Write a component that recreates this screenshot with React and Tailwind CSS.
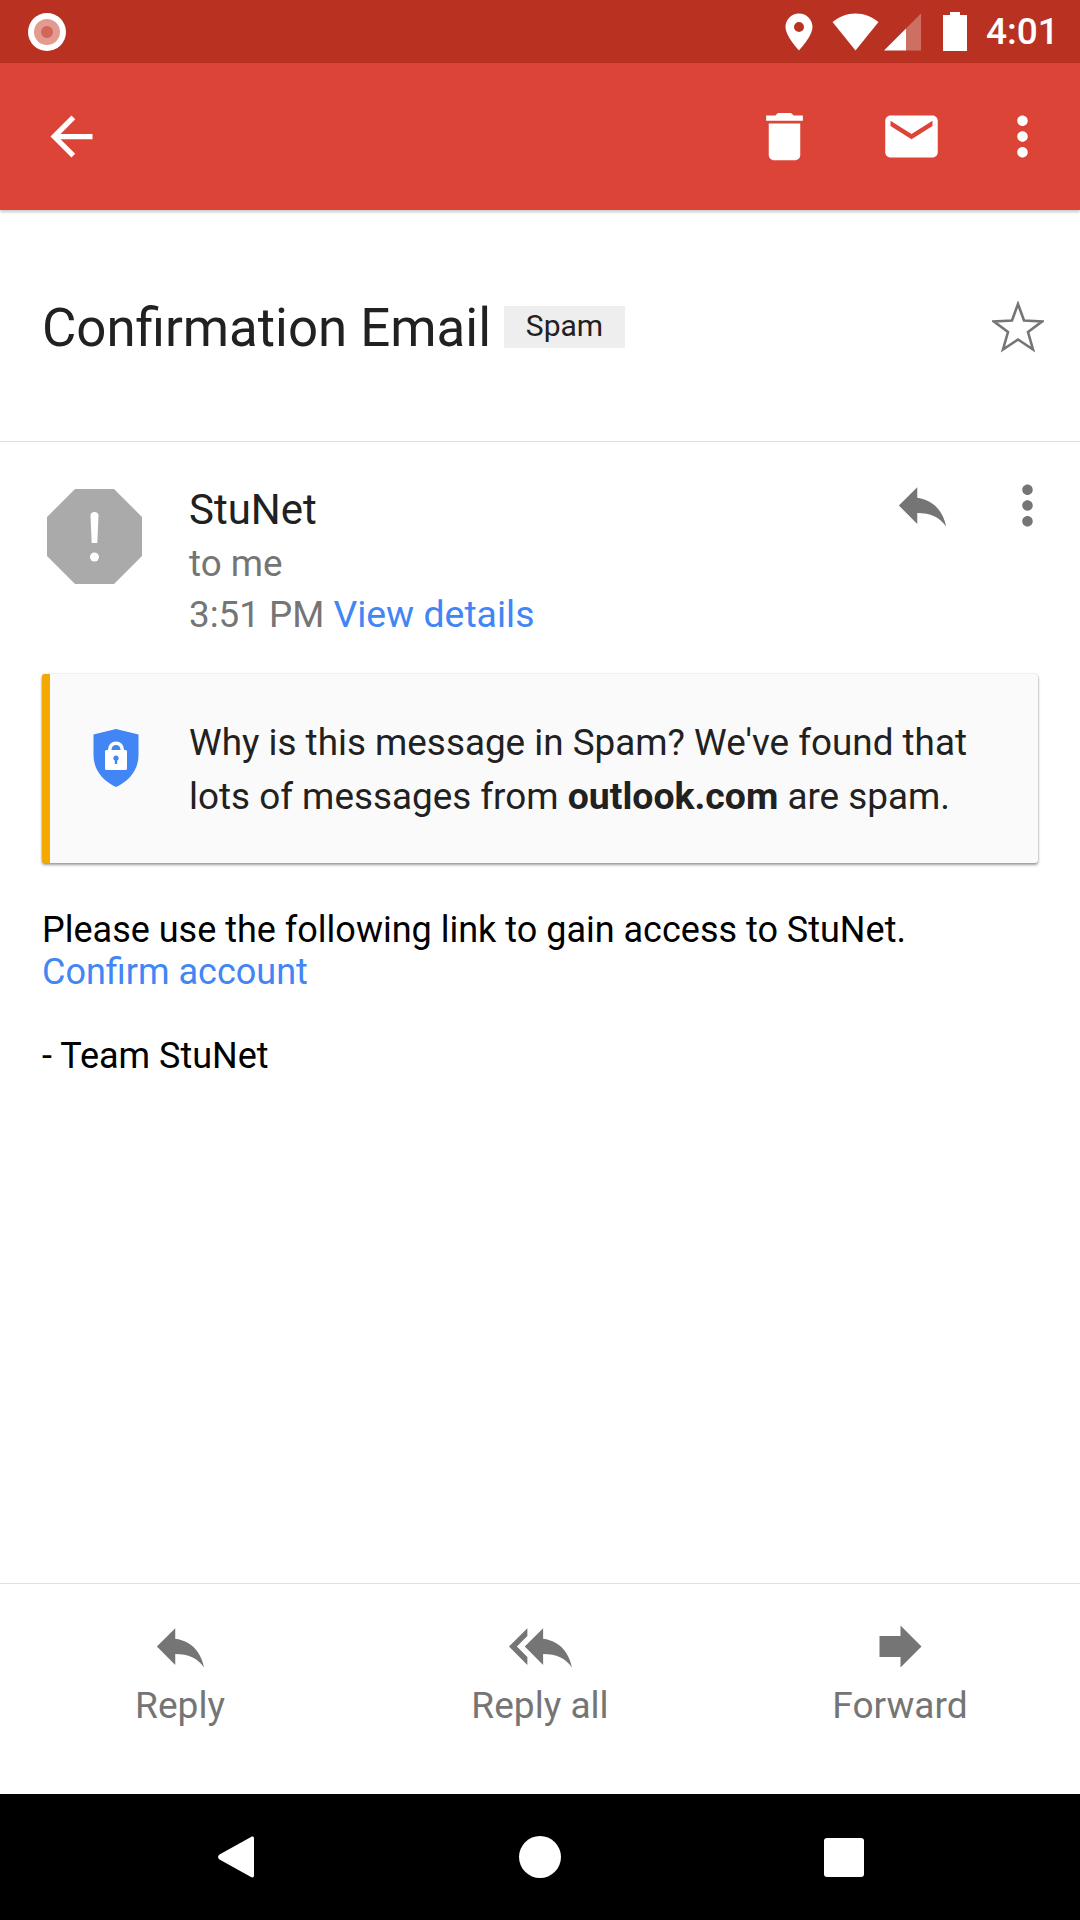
import React from 'react';

const Icon = ({ d, size = 63, className = '', vb = '0 0 24 24' }) => (
  <svg viewBox={vb} width={size} height={size} className={className} fill="currentColor">
    <path d={d} />
  </svg>
);

const REPLY = 'M10 9V5l-7 7 7 7v-4.1c5 0 8.5 1.6 11 5.1-1-5-4-10-11-11z';
const REPLY_ALL = 'M7 8V5l-7 7 7 7v-3l-4-4 4-4zm6 1V5l-7 7 7 7v-4.1c5 0 8.5 1.6 11 5.1-1-5-4-10-11-11z';
const FORWARD = 'M12 8V4l8 8-8 8v-4H4V8z';
const MORE = 'M12 8c1.1 0 2-.9 2-2s-.9-2-2-2-2 .9-2 2 .9 2 2 2zm0 2c-1.1 0-2 .9-2 2s.9 2 2 2 2-.9 2-2-.9-2-2-2zm0 6c-1.1 0-2 .9-2 2s.9 2 2 2 2-.9 2-2-.9-2-2-2z';

const StatusBar = () => (
  <div className="h-[63px] bg-[#b93221] flex items-center justify-between pl-[28px] pr-[25px] shrink-0">
    <svg width="38" height="38" viewBox="0 0 38 38">
      <circle cx="19" cy="19" r="19" fill="#fff" />
      <circle cx="19" cy="19" r="13" fill="#e39a90" />
      <circle cx="19" cy="19" r="6" fill="#d0675a" />
    </svg>
    <div className="flex items-center text-white">
      <svg width="28" height="38" viewBox="0 0 28 38" className="mr-[19px]">
        <path fill="#fff" fillRule="evenodd" d="M14 0.5C6.5 0.5 0.5 6.5 0.5 14 0.5 23 14 37.5 14 37.5S27.5 23 27.5 14C27.5 6.5 21.5 0.5 14 0.5zM14 9a5 5 0 1 1 0 10 5 5 0 0 1 0-10z" />
      </svg>
      <svg width="47" height="38" viewBox="0 0 47 38">
        <path fill="#fff" d="M23.5 37.5L0.5 9C7 3.8 15 0.5 23.5 0.5S40 3.8 46.5 9z" />
      </svg>
      <svg width="37" height="38" viewBox="0 0 37 38" className="ml-[5px]">
        <path fill="#fff" fillOpacity="0.3" d="M37 0.5V37.500H22V15.500z" />
        <path fill="#fff" d="M0 37.500L22 15.500V37.500z" />
      </svg>
      <svg width="24" height="39" viewBox="0 0 24 39" className="ml-[22px]">
        <path fill="#fff" d="M7 0h10v3h7v36H0V3h7z" />
      </svg>
      <span className="ml-[19px] text-[37px] leading-none font-medium w-[69px]">4:01</span>
    </div>
  </div>
);

const Toolbar = () => (
  <div className="relative z-10 h-[147px] bg-[#db4437] text-white shadow-[0_2px_3px_rgba(0,0,0,0.22)] flex items-center shrink-0 pl-[40px]">
    <Icon d="M20 11H7.83l5.59-5.59L12 4l-8 8 8 8 1.41-1.41L7.83 13H20v-2z" />
    <div className="flex-1" />
    <Icon d="M6 19c0 1.1.9 2 2 2h8c1.1 0 2-.9 2-2V7H6v12zM19 4h-3.5l-1-1h-5l-1 1H5v2h14V4z" className="mr-[64px]" />
    <Icon d="M20 4H4c-1.1 0-1.99.9-1.99 2L2 18c0 1.1.9 2 2 2h16c1.1 0 2-.9 2-2V6c0-1.1-.9-2-2-2zm0 4l-8 5-8-5V6l8 5 8-5v2z" className="mr-[48px]" />
    <Icon d={MORE} className="mr-[26px]" />
  </div>
);

const Subject = () => (
  <div className="h-[232px] border-b border-[#e0e0e0] flex items-start pl-[42px] pr-[36px] pt-[88px] shrink-0">
    <span className="text-[52.8px] leading-[58px] text-[#212121] mt-[1px]">Confirmation Email</span>
    <span className="ml-[13px] mt-[8px] h-[42px] w-[121px] bg-[#eeeeee] text-[#212121] text-[30px] leading-[40px] flex items-start pt-[0px] justify-center">Spam</span>
    <div className="flex-1" />
    <svg width="52" height="52" viewBox="0 0 52 52" className="mt-[3px]">
      <polygon points="26,3 32,19.500 50,20.500 36,31 41,48.500 26,38.500 11,48.500 16,31 2,20.500 20,19.500" fill="none" stroke="#757575" strokeWidth="2.6" />
    </svg>
  </div>
);

const SenderRow = () => (
  <div className="flex pl-[47px] pr-[21px] pt-[47px] shrink-0">
    <svg width="95" height="95" viewBox="0 0 95 95" className="shrink-0">
      <polygon points="28,0 67,0 95,28 95,67 67,95 28,95 0,67 0,28" fill="#aaaaaa" />
      <path d="M43.500 26c0-1.400 1.700-3 4-3s4 1.600 4 3l-1.200 28h-5.600z" fill="#fff" />
      <circle cx="47.500" cy="68" r="4.500" fill="#fff" />
    </svg>
    <div className="ml-[47px] flex-1 -mt-[7px]">
      <div className="text-[42px] leading-[56px] text-[#212121]">StuNet</div>
      <div className="text-[36.75px] leading-[50px] text-[#757575] mt-[1px]">to me</div>
      <div className="text-[36.75px] leading-[50px] text-[#757575]">
        3:51 PM <span className="text-[37.4px] text-[#4285f4]">View details</span>
      </div>
    </div>
    <Icon d={REPLY} className="text-[#757575] -mt-[15px]" />
    <Icon d={MORE} className="text-[#757575] ml-[42px] -mt-[15px]" />
  </div>
);

const SpamCard = () => (
  <div className="mx-[42px] mt-[34px] h-[189px] flex bg-[#fafafa] rounded-[3px] overflow-hidden border-l-[8px] border-[#f4a900] shadow-[0_2px_3px_rgba(0,0,0,0.38),0_0_2px_rgba(0,0,0,0.18)] shrink-0 items-center">
    <svg width="46" height="58" viewBox="0 0 46 58" className="ml-[43px] shrink-0 self-start mt-[55px]">
      <path fill="#4285f4" d="M23 0L45.500 5.500V26C45.500 41 36 52 23 58 10 52 0.500 41 0.500 26V5.500z" />
      <path fill="#fff" fillRule="evenodd" d="M15 21v-0.500a8 8 0 0 1 16 0V21h1.500a1.500 1.500 0 0 1 1.500 1.500V39.500a1.500 1.500 0 0 1-1.500 1.500h-19A1.500 1.500 0 0 1 12 39.500V22.500A1.500 1.500 0 0 1 13.500 21zM18.500 21h9v-0.500a4.500 4.500 0 0 0-9 0zM23 26.500a2.700 2.700 0 0 0-1.200 5.100V35h2.400v-3.400a2.700 2.700 0 0 0-1.200-5.100z" />
    </svg>
    <div className="ml-[50px] pt-[3px] text-[36.85px] leading-[54px] text-[#212121] whitespace-nowrap">
      <div>Why is this message in Spam? We've found that</div>
      <div>lots of messages from <b className="font-bold text-[37.4px] leading-none">outlook.com</b> are spam.</div>
    </div>
  </div>
);

const Body = () => (
  <div className="pl-[42px] mt-[46px] text-[36px] leading-[42px] text-black shrink-0">
    <div>Please use the following link to gain access to StuNet.</div>
    <div className="text-[#4285f4]">Confirm account</div>
    <div className="mt-[42px]">- Team StuNet</div>
  </div>
);

const ActionBar = () => (
  <div className="h-[211px] border-t border-[#e0e0e0] grid grid-cols-3 shrink-0 text-[#757575]">
    {[
      { d: REPLY, label: 'Reply' },
      { d: REPLY_ALL, label: 'Reply all' },
      { d: FORWARD, label: 'Forward' },
    ].map((a) => (
      <div key={a.label} className="flex flex-col items-center pt-[31px]">
        <Icon d={a.d} />
        <span className="text-[37.1px] leading-[50px] mt-[3px]">{a.label}</span>
      </div>
    ))}
  </div>
);

const NavBar = () => (
  <div className="h-[126px] bg-black flex items-center justify-center shrink-0 relative">
    <div className="grid grid-cols-3 w-[913px] items-center justify-items-center">
      <svg width="38" height="44" viewBox="0 0 38 44">
        <path fill="#fff" d="M37 3.500V40.500C37 42.500 35.500 43 34 42L2.500 24.500C0.500 23 0.500 21 2.500 19.500L34 2C35.500 1 37 1.500 37 3.500z" />
      </svg>
      <div className="w-[42px] h-[42px] rounded-full bg-white" />
      <div className="w-[40px] h-[39px] rounded-[3px] bg-white" />
    </div>
  </div>
);

export default function App() {
  return (
    <div className="w-[1080px] h-[1920px] bg-white flex flex-col overflow-hidden font-['Roboto',sans-serif]">
      <StatusBar />
      <Toolbar />
      <Subject />
      <SenderRow />
      <SpamCard />
      <Body />
      <div className="flex-1" />
      <ActionBar />
      <NavBar />
    </div>
  );
}
